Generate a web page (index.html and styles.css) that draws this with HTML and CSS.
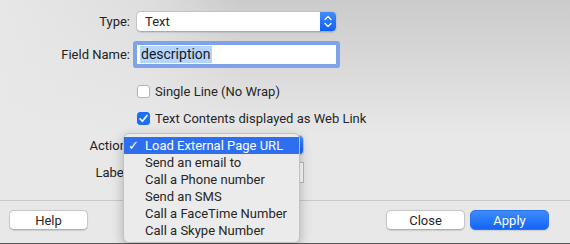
FILE: index.html
```html
<!DOCTYPE html>
<html>
<head>
<meta charset="utf-8">
<link rel="stylesheet" href="styles.css">
</head>
<body>
<div class="panel">
  <div class="row row-type">
    <div class="label">Type:</div>
    <div class="popup">
      <span class="popup-text">Text</span>
      <span class="stepper">
        <svg width="16" height="21" viewBox="0 0 16 21"><path d="M5 8.5 L8 5.5 L11 8.5 M5 12.5 L8 15.5 L11 12.5" fill="none" stroke="#fff" stroke-width="1.3" stroke-linecap="round" stroke-linejoin="round"/></svg>
      </span>
    </div>
  </div>
  <div class="row row-name">
    <div class="label">Field Name:</div>
    <div class="field focused"><span class="sel">description</span></div>
  </div>
  <div class="row row-check1">
    <div class="label"></div>
    <label class="check"><span class="box"></span>Single Line (No Wrap)</label>
  </div>
  <div class="row row-check2">
    <div class="label"></div>
    <label class="check"><span class="box on"><svg width="13" height="13" viewBox="0 0 13 13"><path d="M3 6.8 L5.4 9.3 L10 3.6" fill="none" stroke="#fff" stroke-width="1.6" stroke-linecap="round" stroke-linejoin="round"/></svg></span>Text Contents displayed as Web Link</label>
  </div>
  <div class="row row-action">
    <div class="label">Action:</div>
    <div class="popup short"><span class="popup-text">Load External Page URL</span><span class="stepper"></span></div>
  </div>
  <div class="row row-lbl">
    <div class="label">Label:</div>
    <div class="field short"></div>
  </div>
</div>
<div class="sep"></div>
<div class="buttons">
  <button class="btn">Help</button>
  <div class="spacer"></div>
  <button class="btn">Close</button>
  <button class="btn primary">Apply</button>
</div>
<div class="bottom-edge"></div>

<div class="menu">
  <div class="item active"><span class="tick">✓</span>Load External Page URL</div>
  <div class="item"><span class="tick"></span>Send an email to</div>
  <div class="item"><span class="tick"></span>Call a Phone number</div>
  <div class="item"><span class="tick"></span>Send an SMS</div>
  <div class="item"><span class="tick"></span>Call a FaceTime Number</div>
  <div class="item"><span class="tick"></span>Call a Skype Number</div>
</div>
</body>
</html>
```

FILE: styles.css
```css
html, body {
  margin: 0;
  padding: 0;
}
body {
  width: 570px;
  height: 244px;
  overflow: hidden;
  position: relative;
  font-family: Roboto, "Liberation Sans", sans-serif;
  font-size: 13px;
  color: #262626;
  background:
    linear-gradient(to bottom, rgba(232,232,232,0) 0px, #e8e8e8 135px),
    linear-gradient(to right, #e7e7e7 0px, #dedede 150px, #cbcbcb 240px, #cbcbcb 570px);
}
.panel {
  display: flex;
  flex-direction: column;
  padding-top: 11px;
}
.row {
  display: flex;
  align-items: center;
}
.label {
  width: 130px;
  text-align: right;
  margin-right: 6px;
  flex: none;
  color: #222;
}
.row-type { height: 21px; }
.row-name { height: 21px; margin-top: 12px; }
.row-check1 { height: 17px; margin-top: 18px; }
.row-check2 { height: 17px; margin-top: 10px; }
.row-action { height: 20px; margin-top: 8px; }
.row-lbl { height: 21px; margin-top: 7px; }

.popup {
  width: 201px;
  height: 21px;
  box-sizing: border-box;
  background: #fff;
  border: 1px solid #c3c3c3;
  border-bottom-color: #aaa;
  border-radius: 5px;
  display: flex;
  align-items: center;
  overflow: hidden;
  box-shadow: 0 0.5px 1px rgba(0,0,0,0.1);
}
.popup.short { width: 168px; height: 20px; }
.popup-text {
  flex: 1;
  padding-left: 8px;
}
.stepper {
  width: 16px;
  align-self: stretch;
  background: linear-gradient(#3f8cfb, #0f5ff4);
  display: flex;
  align-items: center;
  justify-content: center;
}
.field {
  width: 201px;
  height: 21px;
  box-sizing: border-box;
  background: #fff;
  border: 1px solid #b9b9b9;
  display: flex;
  align-items: center;
  padding-left: 3px;
}
.field.focused {
  border-color: #7da2e6;
  box-shadow: 0 0 0 3px #7fa3ea;
  border-radius: 1px;
}
.field.short { width: 168px; }
.sel {
  background: #b3d5ff;
  color: #1a1a1a;
  padding: 0 1px;
  line-height: 17px;
  font-size: 14px;
}
.check {
  display: flex;
  align-items: center;
  margin-left: 1px;
}
.box {
  width: 13px;
  height: 13px;
  box-sizing: border-box;
  border: 1px solid #b4b4b4;
  border-radius: 3px;
  background: #fff;
  margin-right: 5px;
  display: flex;
}
.box.on {
  background: #1d6df5;
  border-color: #1d6df5;
}
.box.on svg { margin: -1px; }
.sep {
  height: 1px;
  background: #c9c9c9;
  margin-top: 17px;
}
.buttons {
  display: flex;
  align-items: center;
  padding: 9px 21px 0 9px;
  gap: 5px;
}
.spacer { flex: 1; }
.btn {
  width: 79px;
  height: 20px;
  box-sizing: border-box;
  font-family: inherit;
  font-size: 13px;
  color: #262626;
  background: #fff;
  border: 1px solid #c6c6c6;
  border-bottom-color: #b0b0b0;
  border-radius: 5px;
  padding: 0;
  box-shadow: 0 0.5px 1px rgba(0,0,0,0.12);
}
.btn.primary {
  color: #fff;
  border-color: #2a73f5;
  background: linear-gradient(#3e8cfb, #1265f6);
}
.bottom-edge {
  position: absolute;
  left: 0;
  right: 0;
  bottom: 0;
  height: 1px;
  background: #5a5a5a;
}
.menu {
  position: absolute;
  left: 123px;
  top: 133px;
  width: 177px;
  height: 110px;
  box-sizing: border-box;
  padding-top: 3px;
  background: #ebebeb;
  border: 1px solid #c2c2c2;
  border-radius: 6px;
  box-shadow: 0 4px 12px rgba(0,0,0,0.25);
  z-index: 2;
}
.item {
  height: 17px;
  display: flex;
  align-items: center;
  color: #262626;
}
.item.active {
  background: #2e6ff1;
  color: #fff;
}
.tick {
  width: 21px;
  padding-left: 4px;
  box-sizing: border-box;
  flex: none;
}
```
